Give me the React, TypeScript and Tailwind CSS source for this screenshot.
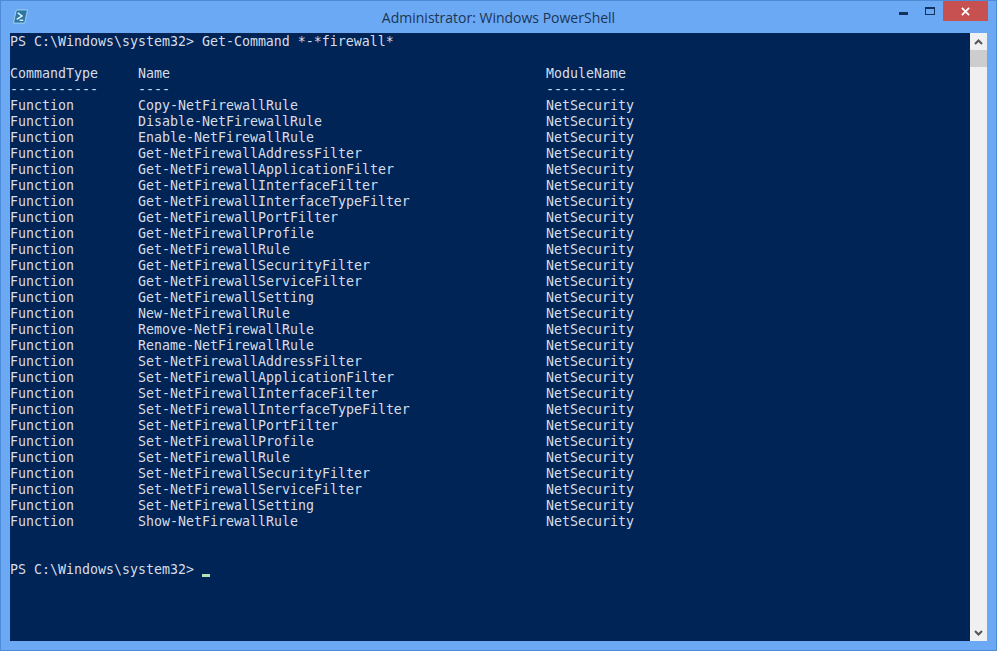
import React from "react";

const names = [
  "Copy-NetFirewallRule",
  "Disable-NetFirewallRule",
  "Enable-NetFirewallRule",
  "Get-NetFirewallAddressFilter",
  "Get-NetFirewallApplicationFilter",
  "Get-NetFirewallInterfaceFilter",
  "Get-NetFirewallInterfaceTypeFilter",
  "Get-NetFirewallPortFilter",
  "Get-NetFirewallProfile",
  "Get-NetFirewallRule",
  "Get-NetFirewallSecurityFilter",
  "Get-NetFirewallServiceFilter",
  "Get-NetFirewallSetting",
  "New-NetFirewallRule",
  "Remove-NetFirewallRule",
  "Rename-NetFirewallRule",
  "Set-NetFirewallAddressFilter",
  "Set-NetFirewallApplicationFilter",
  "Set-NetFirewallInterfaceFilter",
  "Set-NetFirewallInterfaceTypeFilter",
  "Set-NetFirewallPortFilter",
  "Set-NetFirewallProfile",
  "Set-NetFirewallRule",
  "Set-NetFirewallSecurityFilter",
  "Set-NetFirewallServiceFilter",
  "Set-NetFirewallSetting",
  "Show-NetFirewallRule",
];

function Row({ a, b, c }: { a: string; b: string; c: string }) {
  return (
    <div className="flex h-4">
      <span className="w-[128px]">{a}</span>
      <span className="w-[408px]">{b}</span>
      <span>{c}</span>
    </div>
  );
}

export default function App() {
  return (
    <div className="w-[997px] h-[651px] bg-[#6ba9f5] border border-[#4d8bd6] flex flex-col overflow-hidden">
      <div className="h-[32px] shrink-0 grid grid-cols-[1fr_auto_1fr]">
        <div>
          <svg viewBox="0 0 16 16" className="w-[15px] h-[15px] ml-[12px] mt-[8px]">
            <path d="M3.5 1 H15.5 L12.5 15 H0.5 Z" fill="#2b78a8" stroke="#a8d4ea" strokeWidth="1" />
            <path d="M5 4 L9.5 7.5 L4 11" fill="none" stroke="#eef7fb" strokeWidth="1.6" />
            <path d="M7 12 H11" stroke="#eef7fb" strokeWidth="1.4" />
          </svg>
        </div>
        <div className="text-[#1c3553] text-[14px] mt-[6px] font-['Open_Sans',sans-serif]">
          Administrator: Windows PowerShell
        </div>
        <div className="flex items-start justify-end">
          <div className="w-[9px] h-[3px] bg-[#12325c] mt-[11px] mr-[17px]" />
          <div className="w-[8px] h-[5px] border border-[#12325c] border-t-2 mt-[6px] mr-[8px] box-content" />
          <div className="w-[45px] h-[20px] bg-[#c75050] mr-[8px] flex items-center justify-center">
            <svg viewBox="0 0 10 10" className="w-[9px] h-[9px]">
              <path d="M1 1 L9 9 M9 1 L1 9" stroke="#fff" strokeWidth="2" />
            </svg>
          </div>
        </div>
      </div>
      <div className="flex ml-[9px] h-[608px]">
        <div className="w-[960px] pt-px bg-[#012456] text-[#d6dde8] text-[13.29px] leading-4 whitespace-pre font-['DejaVu_Sans_Mono',monospace]">
          <div>PS C:\Windows\system32&gt; Get-Command *-*firewall*</div>
          <div className="h-4" />
          <Row a="CommandType" b="Name" c="ModuleName" />
          <Row a="-----------" b="----" c="----------" />
          {names.map((n) => (
            <Row key={n} a="Function" b={n} c="NetSecurity" />
          ))}
          <div className="h-8" />
          <div className="h-4 flex">
            <span>PS C:\Windows\system32&gt; </span>
            <span className="w-2 h-[3px] bg-[#b5e3b0] mt-[12px]" />
          </div>
        </div>
        <div className="w-[17px] bg-[#f0f0f0] flex flex-col items-center">
          <svg viewBox="0 0 17 17" className="w-[17px] h-[17px] shrink-0">
            <path d="M5 11 L8.5 7.5 L12 11" fill="none" stroke="#555" strokeWidth="2" />
          </svg>
          <div className="w-[17px] h-[17px] bg-[#cdcdcd]" />
          <div className="flex-1" />
          <svg viewBox="0 0 17 17" className="w-[17px] h-[17px] shrink-0">
            <path d="M5 7 L8.5 10.5 L12 7" fill="none" stroke="#555" strokeWidth="2" />
          </svg>
        </div>
      </div>
    </div>
  );
}
